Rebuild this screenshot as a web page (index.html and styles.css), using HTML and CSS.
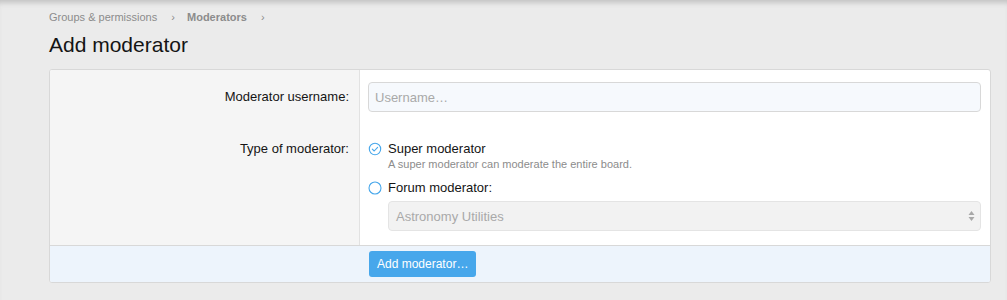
FILE: index.html
```html
<!DOCTYPE html>
<html lang="en">
<head>
    <meta charset="UTF-8">
    <title>Add moderator</title>
    <link rel="stylesheet" href="styles.css">
</head>
<body>

    <!-- Breadcrumb -->
    <div class="breadcrumb">
        <a href="#">Groups &amp; permissions</a>
        <span class="sep">&rsaquo;</span>
        <a href="#" class="current">Moderators</a>
        <span class="sep">&rsaquo;</span>
    </div>

    <h1 class="page-title">Add moderator</h1>

    <!-- Form Block -->
    <form class="block">
        <div class="form-row row-first">
            <div class="row-label">Moderator username:</div>
            <div class="row-input">
                <input type="text" class="input" placeholder="Username…">
            </div>
        </div>

        <div class="form-row row-last">
            <div class="row-label label-type">Type of moderator:</div>
            <div class="row-input">
                <label class="choice">
                    <svg class="radio" width="14" height="14" viewBox="0 0 14 14">
                        <circle cx="7" cy="7" r="5.7" fill="none" stroke="#47a7eb" stroke-width="1.1"/>
                        <path d="M4.3 7.2 L6.2 9 L9.6 5.3" fill="none" stroke="#47a7eb" stroke-width="1.1" stroke-linecap="round" stroke-linejoin="round"/>
                    </svg>
                    <span class="choice-text">Super moderator</span>
                </label>
                <div class="choice-hint">A super moderator can moderate the entire board.</div>

                <label class="choice choice-forum">
                    <svg class="radio" width="14" height="14" viewBox="0 0 14 14">
                        <circle cx="7" cy="7" r="6" fill="none" stroke="#47a7eb" stroke-width="1.1"/>
                    </svg>
                    <span class="choice-text">Forum moderator:</span>
                </label>

                <div class="select">
                    <span>Astronomy Utilities</span>
                    <svg width="7" height="12" viewBox="0 0 7 12">
                        <path d="M3.5 1 L6.5 5 L0.5 5 Z" fill="#a8a8a8"/>
                        <path d="M3.5 11 L6.5 7 L0.5 7 Z" fill="#a8a8a8"/>
                    </svg>
                </div>
            </div>
        </div>

        <!-- Submit Row -->
        <div class="form-submit">
            <div class="submit-spacer"></div>
            <div class="submit-buttons">
                <button type="button" class="button">Add moderator…</button>
            </div>
        </div>
    </form>

</body>
</html>
```

FILE: styles.css
```css
/* Base Styles */
body {
    margin: 0;
    padding: 0 16px 0 49px;
    font-family: "Liberation Sans", Arial, Helvetica, sans-serif;
    color: #141414;
    background: #ebebeb;
    box-shadow: inset 0 6px 5px -3px #c4c4c4;
    min-height: 300px;
}

/* Breadcrumb */
.breadcrumb {
    padding-top: 10px;
    height: 14px;
    font-size: 11px;
    line-height: 14px;
    color: #8c8c8c;
}

.breadcrumb a {
    color: #8c8c8c;
    text-decoration: none;
}

.breadcrumb .current {
    font-weight: bold;
}

.breadcrumb .sep {
    margin: 0 9px 0 11px;
}

.page-title {
    margin: 0;
    padding-top: 9px;
    font-size: 21px;
    line-height: 24px;
    font-weight: normal;
    color: #141414;
}

/* Form Block */
.block {
    margin-top: 12px;
    background: #fff;
    border: 1px solid #d8d8d8;
    border-radius: 3px;
    overflow: hidden;
}

.form-row {
    display: grid;
    grid-template-columns: 310px 1fr;
}

.row-label {
    background: #f5f5f5;
    border-right: 1px solid #e2e2e2;
    text-align: right;
    padding-right: 10px;
    font-size: 13px;
    color: #141414;
}

.row-input {
    padding: 0 9px 0 8px;
}

.row-first .row-label,
.row-first .row-input {
    padding-top: 12px;
    padding-bottom: 13px;
}

.row-first .row-label {
    line-height: 30px;
}

.row-last .row-label,
.row-last .row-input {
    padding-top: 15px;
    padding-bottom: 14px;
}

.label-type {
    line-height: 17px;
}

.input {
    display: block;
    box-sizing: border-box;
    width: 100%;
    height: 30px;
    padding: 0 6px;
    font-family: inherit;
    font-size: 13px;
    background: #f6f9fd;
    border: 1px solid #d8d8d8;
    border-radius: 4px;
    outline: none;
}

.input::placeholder {
    color: #a9a9a9;
}

/* Radio Choices */
.choice {
    display: flex;
    align-items: center;
    height: 17px;
    font-size: 13px;
    line-height: 17px;
}

.radio {
    margin-right: 6px;
    flex: none;
}

.choice-hint {
    padding-left: 20px;
    font-size: 11px;
    line-height: 14px;
    color: #8c8c8c;
}

.choice-forum {
    margin-top: 8px;
}

.select {
    display: flex;
    align-items: center;
    justify-content: space-between;
    box-sizing: border-box;
    height: 30px;
    margin: 5px 0 0 20px;
    padding: 0 5px 0 7px;
    font-size: 13px;
    color: #a9a9a9;
    background: #f2f2f2;
    border: 1px solid #e4e4e4;
    border-radius: 4px;
}

/* Submit Row */
.form-submit {
    display: grid;
    grid-template-columns: 311px 1fr;
    background: #edf4fc;
    border-top: 1px solid #d8d8d8;
}

.submit-buttons {
    padding: 5px 8px 5px;
}

.button {
    display: block;
    height: 26px;
    padding: 0 8px;
    font-family: inherit;
    font-size: 12px;
    color: #fff;
    background: #47a7eb;
    border: none;
    border-radius: 3px;
    cursor: pointer;
}
```
